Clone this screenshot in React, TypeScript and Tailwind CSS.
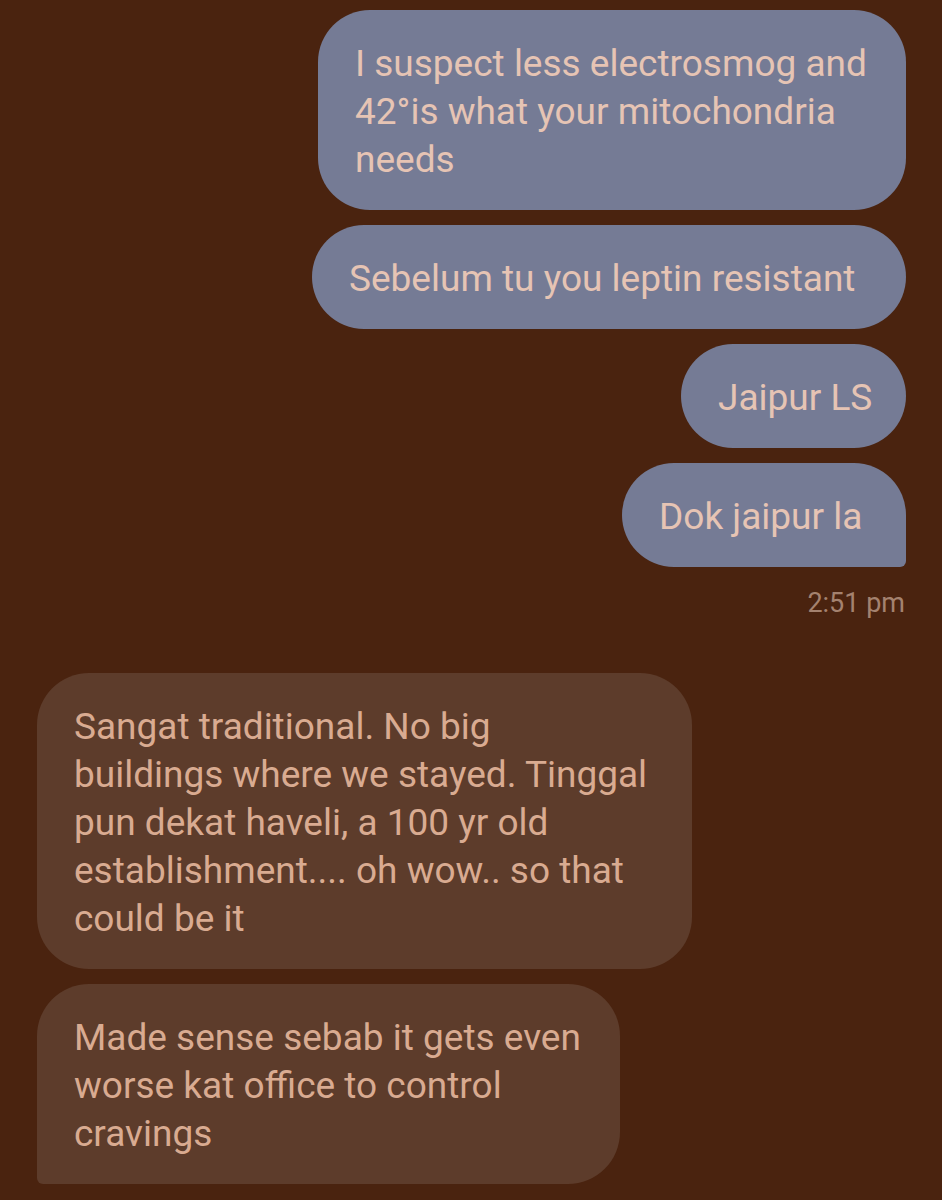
const sent = [
  { id: 1, lines: ['I suspect less electrosmog and', '42°is what your mitochondria', 'needs'], width: 'w-[588px]' },
  { id: 2, lines: ['Sebelum tu you leptin resistant'], width: 'w-[594px]' },
  { id: 3, lines: ['Jaipur LS'], width: 'w-[225px]' },
  { id: 4, lines: ['Dok jaipur la'], width: 'w-[284px]', last: true },
];

const received = [
  {
    id: 1,
    lines: [
      'Sangat traditional. No big',
      'buildings where we stayed. Tinggal',
      'pun dekat haveli, a 100 yr old',
      'establishment.... oh wow.. so that',
      'could be it',
    ],
    width: 'w-[655px]',
  },
  {
    id: 2,
    lines: ['Made sense sebab it gets even', 'worse kat office to control', 'cravings'],
    width: 'w-[583px]',
    last: true,
  },
];

export default function App() {
  return (
    <div
      className="min-h-[1200px] w-[942px] bg-[#4a230f] pt-[10px] overflow-hidden"
      style={{ fontFamily: 'Roboto, "Noto Sans", sans-serif' }}
    >
      {/* Sent */}
      <div className="flex flex-col items-end gap-[15px] pr-[36px]">
        {sent.map((m) => (
          <div
            key={m.id}
            className={`${m.width} bg-[#757b95] text-[#e6c4b4] text-[37px] leading-[48px] pl-[37px] pr-[20px] pt-[30px] pb-[26px] ${
              m.last ? 'rounded-[52px] rounded-br-[6px]' : 'rounded-[52px]'
            }`}
          >
            {m.lines.map((l, i) => (
              <div key={i} className="whitespace-nowrap">{l}</div>
            ))}
          </div>
        ))}
      </div>
      <div className="pr-[37px] text-right text-[27px] leading-[32px] text-[#a4826f] mt-[20px]">2:51 pm</div>

      {/* Received */}
      <div className="flex flex-col items-start gap-[15px] pl-[37px] mt-[54px]">
        {received.map((m) => (
          <div
            key={m.id}
            className={`${m.width} bg-[#5d3c2b] text-[#d9ab91] text-[37px] leading-[48px] pl-[37px] pr-[20px] pt-[30px] pb-[26px] ${
              m.last ? 'rounded-[52px] rounded-bl-[6px]' : 'rounded-[52px]'
            }`}
          >
            {m.lines.map((l, i) => (
              <div key={i} className="whitespace-nowrap">{l}</div>
            ))}
          </div>
        ))}
      </div>
    </div>
  );
}
